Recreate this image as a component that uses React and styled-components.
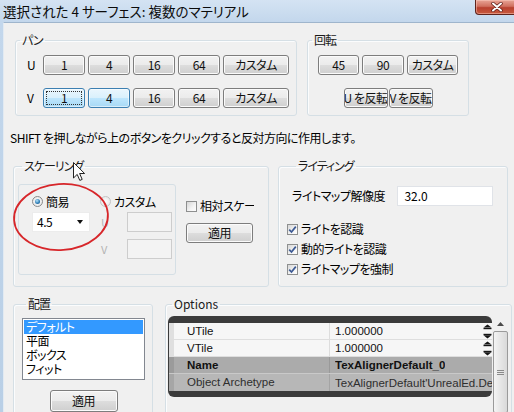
import styled, { createGlobalStyle } from "styled-components"

const GlobalStyle = createGlobalStyle`
  html, body {
    margin: 0;
    padding: 0;
    background: #f0f0f0;
  }
  body {
    font-family: "Noto Sans CJK JP", "Noto Sans", sans-serif;
    font-size: 12px;
    font-feature-settings: "palt";
    letter-spacing: -0.5px;
    color: #000;
  }
  * {
    box-sizing: border-box;
  }
`

const panValues = ["1", "4", "16", "64"]
const placements = ["デフォルト", "平面", "ボックス", "フィット"]
const lightingChecks = ["ライトを認識", "動的ライトを認識", "ライトマップを強制"]
const properties = [
  { name: "UTile", value: "1.000000", spin: true },
  { name: "VTile", value: "1.000000", spin: true },
  { name: "Name", value: "TexAlignerDefault_0", tone: "dark", bold: true },
  {
    name: "Object Archetype",
    value: "TexAlignerDefault'UnrealEd.Default__TexAlignerDefault'",
    tone: "mid",
  },
]

const Check = () => (
  <svg width="9" height="9" viewBox="0 0 9 9">
    <path d="M1.2 4.6 L3.5 7 L7.8 1.6" fill="none" stroke="#3d5a94" strokeWidth="1.7" />
  </svg>
)

const Spinner = () => (
  <svg width="9" height="15" viewBox="0 0 9 15">
    <path d="M4.5 0.5 L8.5 3.5 L0.5 3.5 Z" fill="#151515" />
    <rect x="0.5" y="3.8" width="8" height="1.4" fill="#151515" />
    <rect x="0.5" y="9.8" width="8" height="1.4" fill="#151515" />
    <path d="M0.5 11.2 L8.5 11.2 L4.5 14.5 Z" fill="#151515" />
  </svg>
)

export default function App() {
  return (
    <>
      <GlobalStyle />
      <Window>
        <TitleBar>
          <Title>選択された 4 サーフェス: 複数のマテリアル</Title>
          <CloseButton>
            <svg width="12" height="10" viewBox="0 0 12 10">
              <path d="M2 1.5 L10 8.5 M10 1.5 L2 8.5" stroke="#5a1a14" strokeWidth="3.4" strokeLinecap="round" />
              <path d="M2 1.5 L10 8.5 M10 1.5 L2 8.5" stroke="#fff" strokeWidth="2" strokeLinecap="round" />
            </svg>
          </CloseButton>
        </TitleBar>

        <Content>
          <TopRow>
            <Group $width={282}>
              <Legend>パン</Legend>
              <Stack>
                <ButtonRow>
                  <AxisLabel>U</AxisLabel>
                  {panValues.map(v => (
                    <Button key={v} $w={42}>{v}</Button>
                  ))}
                  <Button $w={66}>カスタム</Button>
                </ButtonRow>
                <ButtonRow>
                  <AxisLabel>V</AxisLabel>
                  {panValues.map((v, i) => (
                    <Button key={v} $w={42} $hot={i < 2} $focused={i === 0}>
                      {v}
                    </Button>
                  ))}
                  <Button $w={66}>カスタム</Button>
                </ButtonRow>
              </Stack>
            </Group>

            <Group $width={162} $gapLeft={10}>
              <Legend>回転</Legend>
              <Stack>
                <CenteredRow $gap={3}>
                  <Button $w={41}>45</Button>
                  <Button $w={42}>90</Button>
                  <Button $w={51}>カスタム</Button>
                </CenteredRow>
                <CenteredRow $gap={1}>
                  <Button $w={44}>U を反転</Button>
                  <Button $w={44}>V を反転</Button>
                </CenteredRow>
              </Stack>
            </Group>
          </TopRow>

          <Hint>SHIFT を押しながら上のボタンをクリックすると反対方向に作用します。</Hint>

          <MidRow>
            <Group $width={256} $pad="10px 4px 11px">
              <Legend>スケーリング</Legend>
              <ScalingBody>
                <ModeBox>
                  <RadioLabel>
                    <Radio $checked />
                    簡易
                  </RadioLabel>
                  <RadioLabel $span>
                    <Radio $disabled />
                    カスタム
                  </RadioLabel>
                  <Combo>
                    4.5
                    <ComboArrow />
                  </Combo>
                  <DimLabel>U</DimLabel>
                  <DimInput />
                  <DimLabel $pushed>V</DimLabel>
                  <DimInput $pushed />
                </ModeBox>
                <SideColumn>
                  <CheckRow>
                    <CheckBox />
                    <ClippedText $w={54}>相対スケール</ClippedText>
                  </CheckRow>
                  <Button $w={67}>適用</Button>
                </SideColumn>
              </ScalingBody>
            </Group>

            <Group $width={230} $gapLeft={9} $pad="12px 14px 7px 13px">
              <Legend>ライティング</Legend>
              <FieldRow>
                <FieldLabel>ライトマップ解像度</FieldLabel>
                <TextInput>32.0</TextInput>
              </FieldRow>
              <CheckList>
                {lightingChecks.map(label => (
                  <CheckRow key={label} $tall>
                    <CheckBox>
                      <Check />
                    </CheckBox>
                    {label}
                  </CheckRow>
                ))}
              </CheckList>
            </Group>
          </MidRow>

          <BottomRow>
            <Group $width={140} $pad="6px 8px 8px">
              <Legend>配置</Legend>
              <PlacementColumn>
                <ListBox>
                  {placements.map((p, i) => (
                    <ListItem key={p} $selected={i === 0}>{p}</ListItem>
                  ))}
                </ListBox>
                <Button $w={68} $h={22}>適用</Button>
              </PlacementColumn>
            </Group>

            <Group $width={347} $gapLeft={12} $pad="4px 2px 8px">
              <Legend $latin>Options</Legend>
              <OptionsBody>
                <PropGrid>
                  {properties.map(p => (
                    <PropRow key={p.name} $tone={p.tone} $bold={p.bold}>
                      <Gutter />
                      <PropName>{p.name}</PropName>
                      <PropValue>
                        <ValueText>{p.value}</ValueText>
                        {p.spin && <Spinner />}
                      </PropValue>
                    </PropRow>
                  ))}
                </PropGrid>
                <ScrollBar>
                  <ScrollArrow>
                    <svg width="7" height="4" viewBox="0 0 7 4">
                      <path d="M3.5 0 L7 4 L0 4 Z" fill="#4a4a4a" />
                    </svg>
                  </ScrollArrow>
                  <Thumb>
                    <Grip />
                    <Grip />
                    <Grip />
                  </Thumb>
                </ScrollBar>
              </OptionsBody>
            </Group>
          </BottomRow>
        </Content>

        <Annotation viewBox="0 0 104 76" width="104" height="76">
          <ellipse cx="52" cy="38" rx="47" ry="33" transform="rotate(-4 52 38)" fill="none" stroke="#d7262a" strokeWidth="1.8" />
        </Annotation>
        <Cursor viewBox="0 0 13 20" width="13" height="20">
          <path d="M0.5 0.5 L0.5 16 L4.2 12.4 L6.8 18.4 L9.2 17.4 L6.6 11.5 L11.6 11.5 Z" fill="#fff" stroke="#222" strokeWidth="1" strokeLinejoin="round" />
        </Cursor>
      </Window>
    </>
  )
}

const Window = styled.div`
  position: relative;
  display: flex;
  flex-direction: column;
  width: 514px;
  height: 412px;
  overflow: hidden;
  background: linear-gradient(180deg, #d4e3f3 0px, #c3d7ec 22px, #b9cfe6 100%);
`

const TitleBar = styled.div`
  display: flex;
  align-items: flex-start;
  justify-content: space-between;
  height: 22px;
  flex: none;
`

const Title = styled.div`
  padding: 3px 0 0 3px;
  font-size: 13.5px;
  line-height: 16px;
  letter-spacing: 0;
  color: #0b0b0b;
  white-space: nowrap;
`

const CloseButton = styled.div`
  display: flex;
  align-items: center;
  justify-content: center;
  width: 44px;
  height: 15px;
  margin-right: -5px;
  border: 1px solid #5e231c;
  border-top: none;
  border-radius: 0 0 0 4px;
  background: linear-gradient(180deg, #e8a496 0%, #d0705f 45%, #b8402f 55%, #c85a3e 100%);
  box-shadow: inset 0 0 0 1px rgba(255, 210, 200, 0.45);
`

const Content = styled.div`
  flex: 1;
  margin-left: 3px;
  padding: 9px 0 0 9px;
  background: #f0f0f0;
  border-top: 1px solid #9fb5cc;
  border-left: 1px solid #e2eaf2;
`

const Group = styled.fieldset`
  flex: none;
  min-width: 0;
  width: ${p => p.$width}px;
  margin: 0 0 0 ${p => p.$gapLeft || 0}px;
  padding: ${p => p.$pad || "7px 0 7px"};
  border: 1px solid #d5dfe5;
  border-radius: 3px;
  box-shadow: inset 1px 1px 0 #fbfcfd;
`

const Legend = styled.legend`
  margin-left: 4px;
  padding: 0 2px;
  font-size: 12px;
  line-height: 16px;
  letter-spacing: ${p => (p.$latin ? "0" : "-1px")};
  color: #1a1a1a;
`

const TopRow = styled.div`
  display: flex;
  margin-left: 2px;
`

const Stack = styled.div`
  display: flex;
  flex-direction: column;
  gap: 13px;
`

const ButtonRow = styled.div`
  display: flex;
  align-items: center;
  gap: 3px;
  padding-left: 10px;
`

const CenteredRow = styled.div`
  display: flex;
  justify-content: center;
  gap: ${p => p.$gap}px;
`

const AxisLabel = styled.span`
  width: 14px;
  padding-left: 1px;
  font-size: 12px;
  line-height: 20px;
`

const Button = styled.div`
  display: flex;
  align-items: center;
  justify-content: center;
  flex: none;
  width: ${p => p.$w}px;
  height: ${p => p.$h || 20}px;
  overflow: hidden;
  white-space: nowrap;
  font-size: 12px;
  line-height: 16px;
  color: #111;
  border: 1px solid ${p => (p.$hot ? "#3c7fb1" : "#7d7d7d")};
  border-radius: 3px;
  background: ${p =>
    p.$hot
      ? "linear-gradient(180deg, #eaf6fd 0%, #d9f0fc 50%, #bee6fd 51%, #a7d9f5 100%)"
      : "linear-gradient(180deg, #f2f2f2 0%, #ebebeb 50%, #dddddd 51%, #cfcfcf 100%)"};
  box-shadow: inset 0 0 0 1px ${p => (p.$hot ? "rgba(255,255,255,0.55)" : "#fbfbfb")};
  outline: ${p => (p.$focused ? "1px dotted #333" : "none")};
  outline-offset: -4px;
`

const Hint = styled.div`
  margin: 15px 0 0 -3px;
  font-size: 12px;
  line-height: 14px;
  white-space: nowrap;
`

const MidRow = styled.div`
  display: flex;
  margin-top: 13px;
`

const ScalingBody = styled.div`
  display: flex;
  align-items: flex-start;
`

const ModeBox = styled.div`
  display: grid;
  grid-template-columns: 58px 17px 45px;
  grid-template-rows: 13px 20px 20px;
  column-gap: 10px;
  row-gap: 4px;
  align-items: center;
  width: 158px;
  height: 91px;
  padding: 10px 0 0 13px;
  border: 1px solid #d5dfe5;
  border-radius: 3px;
`

const RadioLabel = styled.label`
  display: flex;
  align-items: center;
  gap: 3px;
  grid-column: ${p => (p.$span ? "2 / span 2" : "1")};
  font-size: 12px;
  line-height: 13px;
  white-space: nowrap;
`

const Radio = styled.span`
  display: flex;
  align-items: center;
  justify-content: center;
  flex: none;
  width: 11px;
  height: 11px;
  border-radius: 50%;
  border: 1px solid ${p => (p.$disabled ? "#c4c4c4" : "#8a8a8a")};
  background: radial-gradient(circle at 50% 50%, #fdfdfd 0%, #e2e2e2 100%);

  &::after {
    content: "";
    display: ${p => (p.$checked ? "block" : "none")};
    width: 5px;
    height: 5px;
    border-radius: 50%;
    background: radial-gradient(circle at 40% 35%, #b5e4fb 0%, #2a79b2 60%, #164f7d 100%);
  }
`

const Combo = styled.div`
  display: flex;
  align-items: center;
  justify-content: space-between;
  height: 20px;
  padding: 0 6px 0 4px;
  background: #fff;
  border: 1px solid #ececec;
  font-size: 12px;
  line-height: 16px;
`

const ComboArrow = styled.span`
  width: 0;
  height: 0;
  border-left: 3.5px solid transparent;
  border-right: 3.5px solid transparent;
  border-top: 4px solid #111;
`

const DimLabel = styled.span`
  grid-column: 2;
  margin-top: ${p => (p.$pushed ? 6 : 0)}px;
  padding-left: 1px;
  font-size: 11px;
  line-height: 14px;
  color: #b4b4b4;
`

const DimInput = styled.div`
  grid-column: 3;
  height: 20px;
  margin-top: ${p => (p.$pushed ? 6 : 0)}px;
  background: #f3f3f3;
  border: 1px solid #cdcdcd;
`

const SideColumn = styled.div`
  display: flex;
  flex-direction: column;
  align-items: flex-start;
  gap: 10px;
  margin: 15px 0 0 10px;
`

const CheckRow = styled.div`
  display: flex;
  align-items: center;
  gap: 3px;
  height: ${p => (p.$tall ? 20 : 14)}px;
  font-size: 12px;
  line-height: 14px;
  white-space: nowrap;
`

const CheckBox = styled.span`
  display: flex;
  align-items: center;
  justify-content: center;
  flex: none;
  width: 11px;
  height: 11px;
  border: 1px solid #8e8f8f;
  background: linear-gradient(135deg, #d6d6d6 0%, #f4f4f4 60%, #fdfdfd 100%);
`

const ClippedText = styled.span`
  width: ${p => p.$w}px;
  overflow: hidden;
`

const FieldRow = styled.div`
  display: flex;
  align-items: center;
`

const FieldLabel = styled.span`
  width: 106px;
  font-size: 12px;
  line-height: 14px;
  white-space: nowrap;
`

const TextInput = styled.div`
  width: 96px;
  height: 20px;
  padding: 0 6px;
  background: #fff;
  border: 1px solid #e0e3e8;
  font-size: 12px;
  line-height: 18px;
  letter-spacing: 0;
`

const CheckList = styled.div`
  display: flex;
  flex-direction: column;
  margin: 13px 0 0 -5px;
`

const BottomRow = styled.div`
  display: flex;
  margin-top: 9px;
`

const PlacementColumn = styled.div`
  display: flex;
  flex-direction: column;
  align-items: center;
  gap: 10px;
  width: 123px;
`

const ListBox = styled.div`
  width: 123px;
  height: 62px;
  padding: 1px;
  background: #fff;
  border: 1px solid #828790;
`

const ListItem = styled.div`
  height: 14px;
  padding-left: 2px;
  font-size: 12px;
  line-height: 14px;
  color: ${p => (p.$selected ? "#fff" : "#000")};
  background: ${p => (p.$selected ? "#3399ff" : "transparent")};
`

const OptionsBody = styled.div`
  display: flex;
  align-items: flex-start;
  gap: 1px;
`

const PropGrid = styled.div`
  width: 324px;
  padding: 7px 0 6px 1px;
  border-radius: 6px;
  background: #3b3b3b;
`

const toneColor = {
  dark: "#ababab",
  mid: "#b7b7b7",
}

const PropRow = styled.div`
  display: grid;
  grid-template-columns: 5px 156px 1fr;
  height: 17px;
  background: ${p => toneColor[p.$tone] || "#f6f6f6"};
  border-bottom: 1px solid ${p => (p.$tone ? "#c9c9c9" : "#dedede")};
  font-family: "Liberation Sans", Arial, sans-serif;
  font-size: 11.5px;
  font-weight: ${p => (p.$bold ? 700 : 400)};
  line-height: 16px;
  letter-spacing: 0;
  color: ${p => (p.$tone === "mid" ? "#2e2e2e" : "#111")};

  &:last-child {
    border-bottom: none;
  }
`

const Gutter = styled.span`
  background: rgba(0, 0, 0, 0.09);
`

const PropName = styled.span`
  padding-left: 13px;
  border-right: 1px solid rgba(0, 0, 0, 0.1);
  white-space: nowrap;
`

const PropValue = styled.span`
  display: flex;
  align-items: center;
  justify-content: space-between;
  min-width: 0;
  padding-left: 5px;
  overflow: hidden;
`

const ValueText = styled.span`
  white-space: nowrap;
  overflow: hidden;
`

const ScrollBar = styled.div`
  display: flex;
  flex-direction: column;
  width: 15px;
  height: 96px;
  margin-top: 1px;
`

const ScrollArrow = styled.div`
  display: flex;
  align-items: center;
  justify-content: center;
  height: 14px;
`

const Thumb = styled.div`
  display: flex;
  flex: 1;
  flex-direction: column;
  align-items: center;
  justify-content: center;
  gap: 1px;
  border: 1px solid #9a9a9a;
  border-radius: 2px;
  background: linear-gradient(90deg, #f4f4f4 0%, #e6e6e6 50%, #d9d9d9 100%);
`

const Grip = styled.span`
  width: 7px;
  height: 1px;
  background: #8a8a8a;
`

const Annotation = styled.svg`
  position: absolute;
  left: 9px;
  top: 179px;
  pointer-events: none;
`

const Cursor = styled.svg`
  position: absolute;
  left: 73px;
  top: 162px;
  pointer-events: none;
`
